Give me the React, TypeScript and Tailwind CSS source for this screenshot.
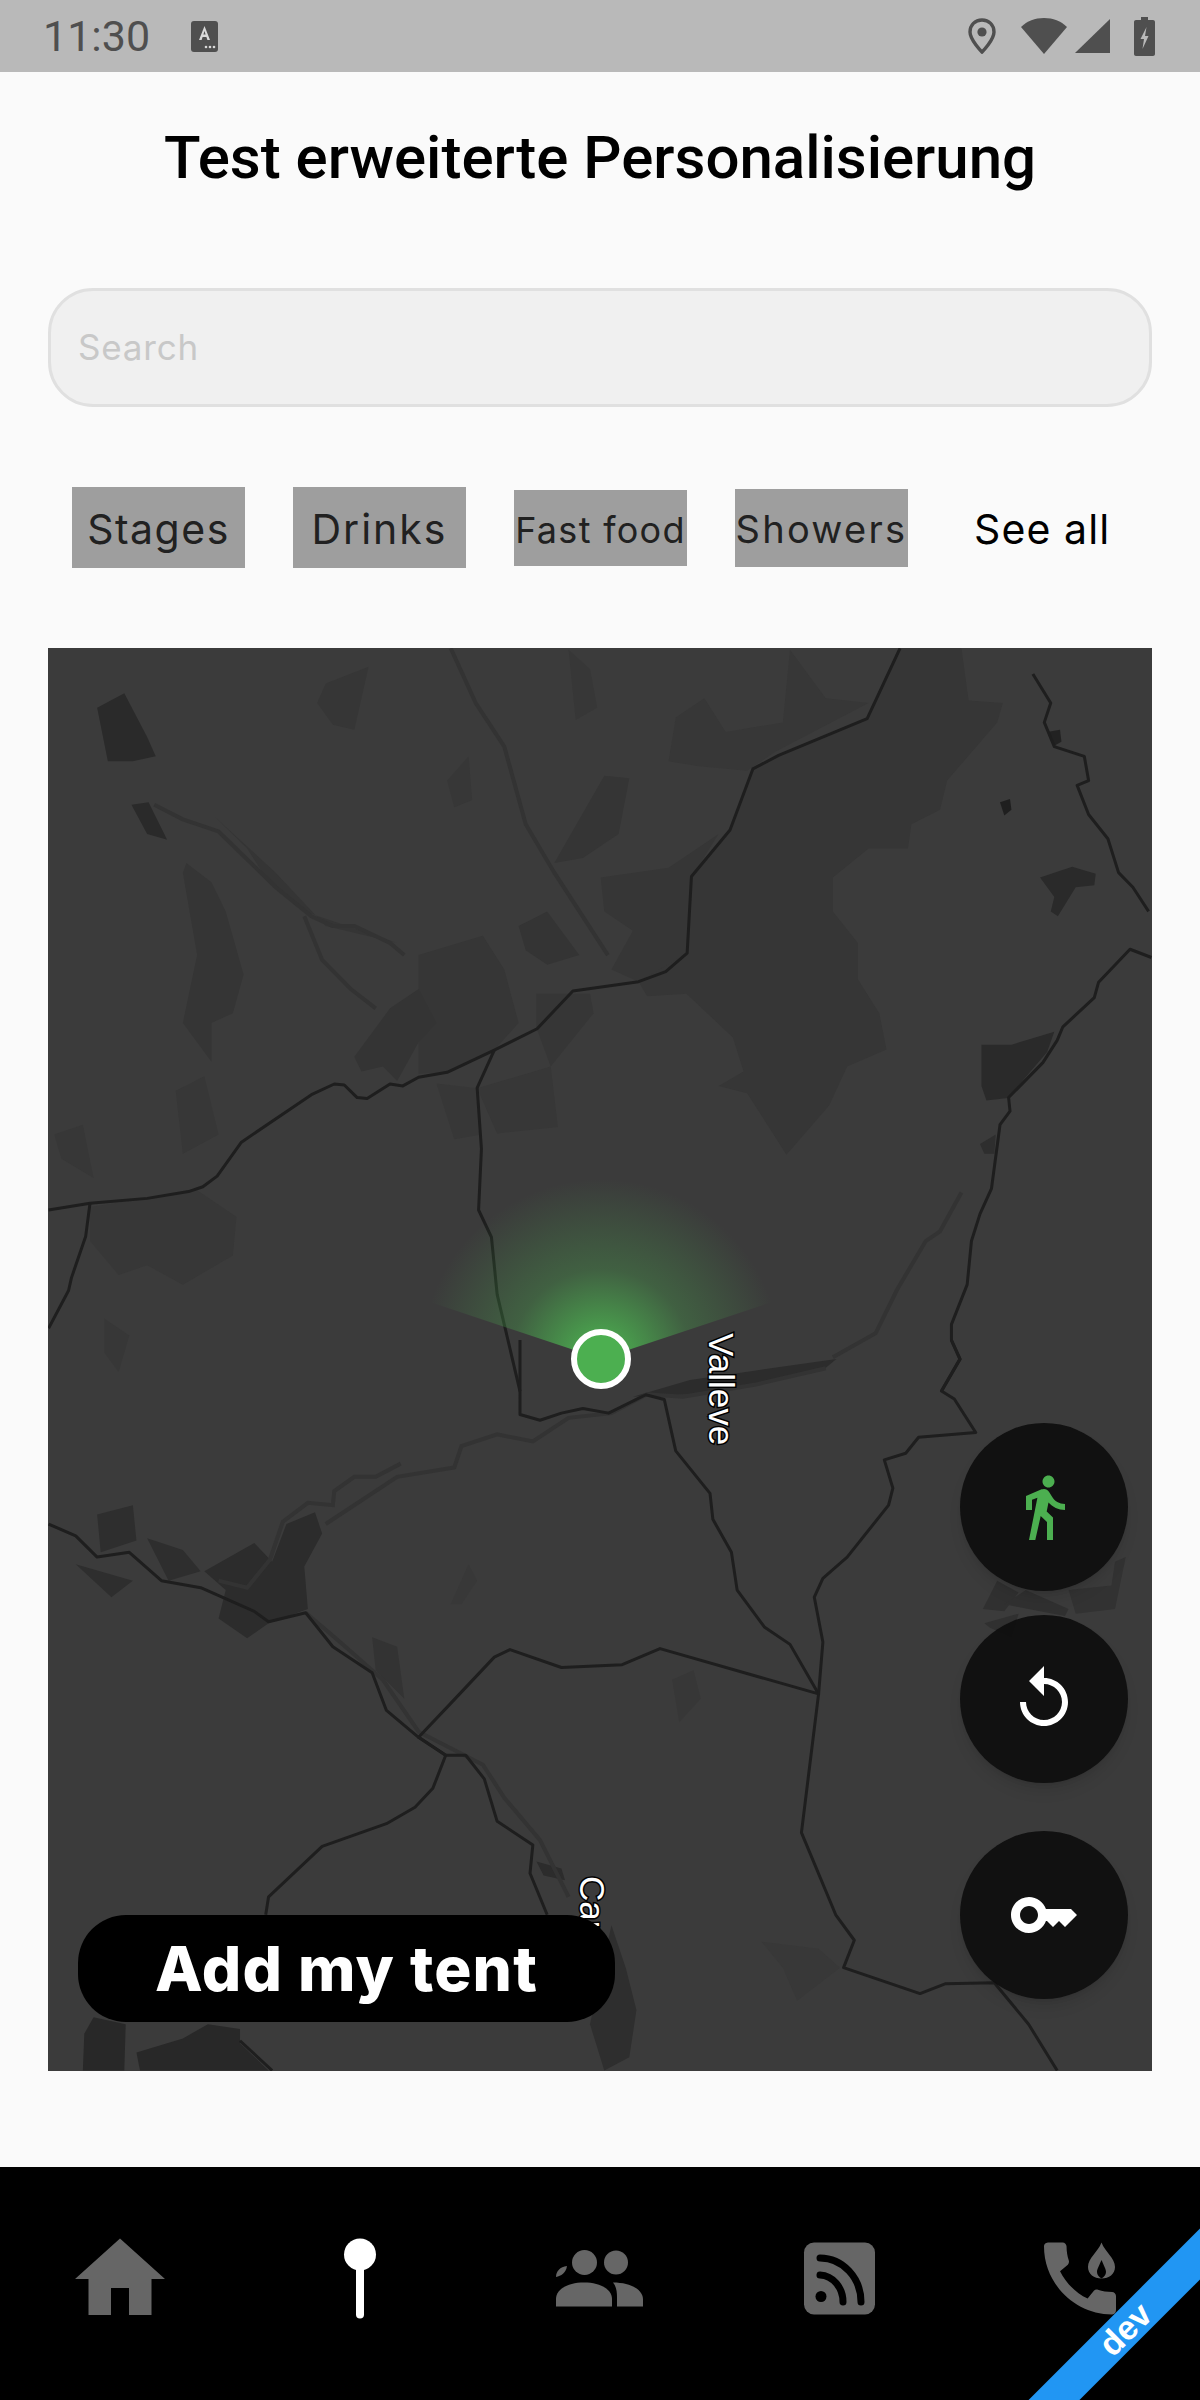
const areasTop: [string, string][] = [
  ["#363636", "1204,17 1290,17 1300,125 1348,130 1340,170 1270,290 1260,350 1220,380 1215,430 1160,430 1110,490 1110,560 1145,625 1145,700 1175,770 1185,845 1130,880 1105,960 1045,1062 990,935 950,920 985,890 970,820 905,730 850,735 838,705 905,645 912,490 966,392 998,266 1034,238 1158,162"],
  ["#363636", "785,490 880,470 950,400 912,490 906,645 838,705 800,680 830,600 790,560"],
  ["#353535", "720,460 790,280 825,285 810,400 760,450"],
  ["#363636", "388,130 400,90 460,55 440,185 410,175"],
  ["#363636", "530,650 620,610 650,680 670,790 636,846 570,892 530,895"],
  ["#363636", "695,730 770,730 775,770 715,880 695,800"],
  ["#373737", "555,915 612,925 618,1020 580,1030"],
  ["#373737", "612,925 715,880 725,1005 640,1018"],
  ["#353535", "205,460 240,500 260,560 285,690 270,770 240,790 240,870 200,790 220,650 200,480"],
  ["#373737", "70,1170 220,1135 275,1190 270,1270 200,1330 150,1290 110,1310 70,1240"],
  ["#343434", "440,860 490,760 530,720 555,790 530,830 500,910 480,880 450,890"],
  ["#343434", "670,590 710,560 755,650 710,670 680,640"],
  ["#373737", "890,160 930,120 960,190 1040,170 1050,20 1100,120 1160,130 1030,230 990,270 920,260 880,250"],
  ["#353535", "245,365 330,480 400,590 500,625 450,600 370,560 320,500 290,430"],
  ["#373737", "570,290 600,240 605,330 580,345"],
  ["#373737", "740,20 770,60 780,140 750,165"],
  ["#373737", "190,930 230,900 250,1020 200,1060"],
  ["#373737", "20,1020 60,1000 75,1110 30,1070"],
  ["#373737", "90,1400 125,1435 110,1510 90,1470"],
  ["#2a2a2a", "80,140 118,110 150,200 162,240 130,250 95,250"],
  ["#2a2a2a", "128,340 152,335 178,412 150,400"],
  ["#2a2a2a", "1400,490 1445,468 1478,482 1476,506 1450,510 1425,570 1415,560 1420,530"],
  ["#2a2a2a", "1318,835 1360,835 1420,808 1410,850 1355,945 1325,950 1318,920"],
  ["#1f1f1f", "1344,335 1358,328 1360,350 1350,362"],
  ["#222222", "1410,190 1428,185 1430,210 1420,218"],
  ["#2e2e2e", "1316,1040 1338,1020 1336,1060 1322,1060"],
];

const linesTop = [
  "12,1176 70,1162 150,1152 208,1138 228,1128 248,1106 282,1036 380,938 412,916 426,918 444,944 458,946 490,916 508,920 530,902 570,892 636,846 696,802 746,724 838,705 876,684 906,646 912,488 966,392 998,266 1034,238 1158,162 1204,17",
  "636,846 612,924 618,1050 614,1176 632,1232 640,1350 672,1550",
  "70,1162 64,1230 44,1316 40,1342 12,1420",
  "1390,70 1415,130 1406,170 1420,220 1462,240 1468,290 1452,300 1468,360 1495,410 1510,480 1530,510 1552,560",
  "1556,655 1526,638 1482,706 1476,738 1432,798 1424,826 1404,872 1356,944 1358,972 1344,1000 1332,1132 1316,1184 1304,1240 1298,1330 1276,1412 1276,1445 1288,1484 1262,1550",
];

const fainterTop = [
  "575,17 610,130 650,220 680,380 720,480 795,650",
  "160,340 200,370 250,395 330,510 380,570 410,590 440,590 490,625 510,650",
  "370,570 395,660 435,720 470,760",
  "1290,1140 1260,1220 1240,1240 1200,1340 1170,1430 1110,1480",
];

const areasBottom: [string, string][] = [
  ["#2e2e2e", "50,475 130,510 100,545"],
  ["#2e2e2e", "80,370 130,350 135,425 85,450"],
  ["#2c2c2c", "230,490 300,430 325,470 345,390 385,365 395,410 370,480 375,570 320,600 290,632 250,590 260,530"],
  ["#2e2e2e", "150,420 200,445 225,490 180,510"],
  ["#333333", "465,630 500,650 510,760 470,700"],
  ["#2c2c2c", "695,1105 730,1120 735,1145 705,1135"],
  ["#282828", "75,1435 120,1450 118,1548 60,1548 62,1470"],
  ["#282828", "135,1510 200,1480 235,1450 280,1460 280,1490 320,1548 140,1548"],
  ["#2e2e2e", "800,1240 820,1330 835,1420 825,1520 790,1548 770,1450"],
  ["#303030", "1320,570 1340,510 1370,535 1350,575"],
  ["#303030", "1350,560 1380,530 1440,570 1435,585 1400,575"],
  ["#323232", "1440,530 1500,520 1505,470 1520,460 1505,570 1450,580"],
  ["#303030", "1322,600 1370,580 1360,630 1330,610"],
  ["#373737", "885,720 915,700 925,760 895,810"],
  ["#2c2c2c", "830,120 910,85 1000,65 1115,40 1095,65 1000,95 910,115"],
  ["#383838", "575,560 600,475 612,510 590,560"],
  ["#383838", "1010,1275 1090,1290 1120,1330 1060,1400 1040,1330"],
];

const linesBottom = [
  "672,0 672,158 700,170 730,155 760,145 796,155 848,116 874,126 890,235 938,325 942,380 968,450 976,530 1014,608 1050,645 1090,750 868,654 815,688 730,694 658,656 636,672 575,770 530,842 568,880",
  "12,390 50,415 80,460 125,450 170,510 225,525 300,575 320,597 372,578 410,650 465,705 485,785 530,842 568,880 596,880 622,930 640,1020 690,1070 686,1130 710,1218",
  "568,880 550,950 525,990 485,1025 395,1073 320,1180 316,1218",
  "1276,0 1288,40 1262,108 1280,125 1310,196 1230,206 1212,240 1182,254 1194,314 1188,350 1130,460 1096,505 1084,545 1096,640 1090,750 1066,1044 1114,1218 1140,1272 1125,1330 1232,1385 1268,1364 1336,1362 1384,1450 1424,1548",
  "280,1485 325,1548",
];

const fainterBottom = [
  "505,262 470,290 440,290 412,320 410,350 375,345 340,385 322,465 290,525 250,510",
  "400,390 500,290 580,270 590,225 640,200 690,215 740,165 800,155 850,115 900,120 1000,95 1100,60",
  "372,578 420,640 480,720 530,830 620,900 650,970 700,1060 740,1180",
];

function MapLayer({ areas, lines, faint, transform }: { areas: [string, string][]; lines: string[]; faint: string[]; transform: string }) {
  return (
    <g transform={transform}>
      {areas.map(([color, points], i) => (
        <polygon key={i} points={points} fill={color} />
      ))}
      {faint.map((points, i) => (
        <polyline key={i} points={points} fill="none" stroke="#333333" strokeWidth={4} vectorEffect="non-scaling-stroke" />
      ))}
      {lines.map((points, i) => (
        <polyline key={i} points={points} fill="none" stroke="#1e1e1e" strokeWidth={3} strokeLinejoin="round" vectorEffect="non-scaling-stroke" />
      ))}
    </g>
  );
}

function MapArt() {
  return (
    <svg className="absolute inset-0 w-full h-full" viewBox="48 648 1104 1423">
      <defs>
        <radialGradient id="cone" gradientUnits="userSpaceOnUse" cx="601" cy="1359" r="180">
          <stop offset="0.15" stopColor="#4caf50" stopOpacity="0.85" />
          <stop offset="0.5" stopColor="#4caf50" stopOpacity="0.32" />
          <stop offset="1" stopColor="#4caf50" stopOpacity="0" />
        </radialGradient>
      </defs>
      <MapLayer areas={areasTop} lines={linesTop} faint={fainterTop} transform="translate(40 640) scale(0.7143 0.4847)" />
      <MapLayer areas={areasBottom} lines={linesBottom} faint={fainterBottom} transform="translate(40 1340) scale(0.7143 0.4719)" />
      <path d="M601 1359 L391 1289 L391 1150 L811 1150 L811 1289 Z" fill="url(#cone)" />
      <circle cx="601" cy="1359" r="27" fill="#4caf50" stroke="#ffffff" strokeWidth="6" />
      <text
        transform="translate(709 1333) rotate(90)"
        fontFamily="'Liberation Sans', sans-serif"
        fontSize="35"
        fill="#ffffff"
        stroke="#000000"
        strokeWidth="3"
        paintOrder="stroke"
      >
        Valleve
      </text>
      <text
        transform="translate(580 1876) rotate(90)"
        fontFamily="'Liberation Sans', sans-serif"
        fontSize="35"
        fill="#ffffff"
        stroke="#000000"
        strokeWidth="3"
        paintOrder="stroke"
      >
        Car
      </text>
    </svg>
  );
}

function StatusBar() {
  return (
    <div className="h-[72px] bg-[#b9b9b9] flex items-center justify-between pl-[43px] pr-[45px]">
      <div className="flex items-center">
        <span className="font-['Roboto',sans-serif] text-[43px] leading-none text-[#4f4f4f]">11:30</span>
        <svg className="ml-[41px]" width="27" height="31" viewBox="0 0 27 31">
          <rect width="27" height="31" rx="3" fill="#4f4f4f" />
          <path d="M13.5 5 L8 19 H10.6 L11.6 16 H15.4 L16.4 19 H19 Z M12.4 13.6 L13.5 10 L14.6 13.6 Z" fill="#d8d8d8" fillRule="evenodd" />
          <circle cx="15" cy="26" r="1.3" fill="#d8d8d8" />
          <circle cx="19" cy="26" r="1.3" fill="#d8d8d8" />
          <circle cx="23" cy="26" r="1.3" fill="#d8d8d8" />
        </svg>
      </div>
      <div className="flex items-center">
        <svg width="28" height="36" viewBox="0 0 28 36">
          <path d="M14 2 C7 2 2 7 2 14 C2 22 14 34 14 34 C14 34 26 22 26 14 C26 7 21 2 14 2 Z" fill="none" stroke="#4f4f4f" strokeWidth="3.4" />
          <circle cx="14" cy="14" r="4.6" fill="#4f4f4f" />
        </svg>
        <svg className="ml-[25px]" width="46" height="36" viewBox="0 0 46 36">
          <path d="M23 36 L0 9 C6 3 14 0 23 0 C32 0 40 3 46 9 Z" fill="#4f4f4f" />
        </svg>
        <svg className="ml-[8px]" width="35" height="34" viewBox="0 0 35 34">
          <path d="M35 0 V34 H0 Z" fill="#4f4f4f" />
        </svg>
        <svg className="ml-[24px]" width="21" height="39" viewBox="0 0 21 39">
          <path d="M7 0 H14 V3 H19 C20.1 3 21 3.9 21 5 V37 C21 38.1 20.1 39 19 39 H2 C0.9 39 0 38.1 0 37 V5 C0 3.9 0.9 3 2 3 H7 Z" fill="#4f4f4f" />
          <path d="M12.5 10 L6.5 22 H10 L8.5 32 L14.5 19 H11 Z" fill="#b9b9b9" />
        </svg>
      </div>
    </div>
  );
}

const chips = [
  { label: "Stages", box: "h-[81px]", text: "text-[41px] tracking-[1.5px]" },
  { label: "Drinks", box: "h-[81px]", text: "text-[41px] tracking-[2px]" },
  { label: "Fast food", box: "h-[76px]", text: "text-[36px] tracking-[1.3px]" },
  { label: "Showers", box: "h-[78px]", text: "text-[38px] tracking-[2.3px]" },
];

const iconGrey = "#666666";

function BottomNav() {
  return (
    <div className="h-[233px] bg-black grid grid-cols-5 pt-[58px]">
      <div className="flex justify-center">
        <svg width="108" height="108" viewBox="0 0 24 24" fill={iconGrey}>
          <path d="M10 20v-6h4v6h5v-8h3L12 3 2 12h3v8z" />
        </svg>
      </div>
      <div className="flex justify-center">
        <svg width="108" height="108" viewBox="0 0 108 108" fill="#ffffff">
          <circle cx="54" cy="29.5" r="16" />
          <rect x="50" y="40" width="8" height="53.5" rx="4" />
        </svg>
      </div>
      <div className="flex justify-center">
        <svg width="108" height="108" viewBox="0 0 108 108" fill={iconGrey}>
          <circle cx="38.5" cy="37.5" r="12.5" />
          <circle cx="70" cy="37.5" r="12" />
          <path d="M21 41 C14 42 10 46 10 52 C15 51 20 48 21 41 Z" />
          <path d="M10 81.5 V74 C10 64 22 57.5 38 57.5 C54 57.5 66 64 66 74 V81.5 Z" />
          <path d="M67 57.5 C85 57.5 97 65 97 74 V81.5 H71 V72 C71 66 70 61 67 57.5 Z" />
        </svg>
      </div>
      <div className="flex justify-center">
        <svg width="108" height="108" viewBox="0 0 108 108">
          <rect x="18" y="17.5" width="71" height="72" rx="10" fill={iconGrey} />
          <circle cx="35" cy="71.5" r="5.5" fill="#000000" />
          <path d="M34 50 A24 27 0 0 1 57 77 M34 33 A41 44 0 0 1 75 77" fill="none" stroke="#000000" strokeWidth="7" strokeLinecap="round" />
        </svg>
      </div>
      <div className="flex justify-center">
        <svg width="108" height="108" viewBox="0 0 108 108" fill={iconGrey}>
          <path
            transform="translate(6 5.5) scale(4)"
            d="M20.01 15.38c-1.23 0-2.42-.2-3.53-.56-.35-.12-.74-.03-1.01.24l-1.57 1.97c-2.83-1.35-5.48-3.9-6.89-6.83l1.95-1.66c.27-.28.35-.67.24-1.02-.37-1.11-.56-2.3-.56-3.53 0-.54-.45-.99-.99-.99H4.19C3.65 3 3 3.24 3 3.99 3 13.28 10.73 21 20.01 21c.71 0 .99-.63.99-1.18v-3.45c0-.54-.45-.99-.99-.99z"
          />
          <path d="M75.5 17.5 C72 27 62 33 62 42 C62 49 68 53.5 75.5 53.5 C83 53.5 89 49 89 42 C89 33 79 27 75.5 17.5 Z" />
          <path d="M75.5 35 C73 41 71 44 71 47 C71 50 73 52 75.5 53.5 C78 52 80 50 80 47 C80 44 78 41 75.5 35 Z" fill="#000000" />
        </svg>
      </div>
    </div>
  );
}

export default function App() {
  return (
    <div className="relative w-[1200px] h-[2400px] overflow-hidden bg-[#fafafa] flex flex-col">
      <StatusBar />
      <div className="h-[172px] flex items-center justify-center">
        <h1 className="font-['Roboto',sans-serif] font-medium text-[60px] leading-none text-black">Test erweiterte Personalisierung</h1>
      </div>
      <div className="mt-[44px] mx-[48px] h-[119px] rounded-[45px] border-[3px] border-[#e0e0e0] bg-[#f0f0f0] flex items-center pl-[27px]">
        <span className="font-['Inter',sans-serif] text-[35px] text-[#c8c8c8] tracking-[0.8px]">Search</span>
      </div>
      <div className="h-[241px] flex items-center pl-[72px] gap-[48px]">
        {chips.map((c) => (
          <div key={c.label} className={`w-[173px] ${c.box} bg-[#9e9e9e] flex items-center justify-center pt-[4px]`}>
            <span className={`font-['Inter',sans-serif] ${c.text} text-[#212121] whitespace-nowrap`}>{c.label}</span>
          </div>
        ))}
        <span className="ml-[18px] pt-[4px] font-['Inter',sans-serif] text-[41px] tracking-[1.1px] text-black whitespace-nowrap">See all</span>
      </div>
      <div className="relative mx-[48px] h-[1423px] bg-[#3b3b3b] overflow-hidden">
        <MapArt />
        <div className="absolute left-[30px] top-[1267px] w-[537px] h-[107px] rounded-[48px] bg-black flex items-center justify-center">
          <span className="font-['Inter',sans-serif] font-extrabold text-[62px] tracking-[1.2px] leading-none text-white">Add my tent</span>
        </div>
        <div className="absolute left-[912px] top-[775px] w-[168px] h-[168px] rounded-full bg-[#0f0f0f]/95 shadow-lg flex items-center justify-center">
          <svg width="72" height="72" viewBox="0 0 24 24" fill="#4caf50">
            <path d="M13.5 5.5c1.1 0 2-.9 2-2s-.9-2-2-2-2 .9-2 2 .9 2 2 2zM9.8 8.9L7 23h2.1l1.8-8 2.1 2v6h2v-7.5l-2.1-2 .6-3C14.8 12 16.8 13 19 13v-2c-1.9 0-3.5-1-4.3-2.4l-1-1.6c-.4-.6-1-1-1.7-1-.3 0-.5.1-.8.1L6 8.3V13h2V9.6l1.8-.7" />
          </svg>
        </div>
        <div className="absolute left-[912px] top-[967px] w-[168px] h-[168px] rounded-full bg-[#0f0f0f]/95 shadow-lg flex items-center justify-center">
          <svg width="72" height="72" viewBox="0 0 24 24" fill="#ffffff">
            <path d="M12 5V1L7 6l5 5V7c3.31 0 6 2.69 6 6s-2.69 6-6 6-6-2.69-6-6H4c0 4.42 3.58 8 8 8s8-3.58 8-8-3.58-8-8-8z" />
          </svg>
        </div>
        <div className="absolute left-[912px] top-[1183px] w-[168px] h-[168px] rounded-full bg-[#0f0f0f]/95 shadow-lg flex items-center justify-center">
          <svg width="72" height="72" viewBox="0 0 24 24" fill="#ffffff">
            <path d="M21 10h-8.35C11.83 7.67 9.61 6 7 6c-3.31 0-6 2.69-6 6s2.69 6 6 6c2.61 0 4.83-1.67 5.65-4H13l2 2 2-2 2 2 4-4.04L21 10zM7 15c-1.65 0-3-1.35-3-3s1.35-3 3-3 3 1.35 3 3-1.35 3-3 3z" />
          </svg>
        </div>
      </div>
      <div className="flex-1" />
      <BottomNav />
      <div className="absolute right-0 bottom-0 w-[240px] h-[240px] overflow-hidden pointer-events-none">
        <div className="absolute left-[-35px] top-[151px] w-[400px] h-[36px] -rotate-45 bg-[#2196f3] flex items-center justify-center">
          <span className="font-['Liberation_Sans',sans-serif] font-bold text-[34px] leading-none text-white">dev</span>
        </div>
      </div>
    </div>
  );
}
